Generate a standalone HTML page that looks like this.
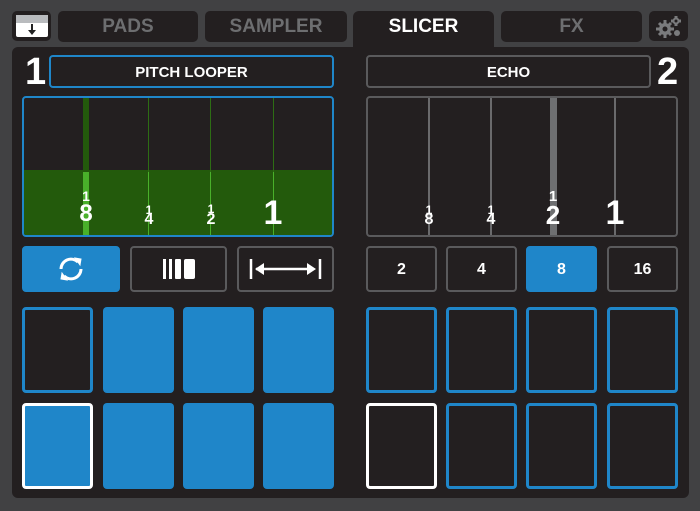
<!DOCTYPE html><html><head><style>
body{margin:0;width:700px;height:511px;background:#414143;position:relative;overflow:hidden;font-family:"Liberation Sans Narrow","Liberation Sans",sans-serif;}
div{position:absolute;box-sizing:border-box}
.tab{top:11px;height:31px;background:#231f20;border-radius:5px;color:#6d6e70;font-weight:bold;font-size:19px;text-align:center;line-height:31px}
.pnl{left:12px;top:47px;width:677px;height:451px;background:#231f20;border-radius:6px}
.hd{top:55px;height:33px;border-radius:4px;color:#fff;font-weight:bold;font-size:15px;text-align:center;line-height:31px}
.big{top:54px;color:#fff;font-weight:bold;font-size:38px;line-height:36px}
.pad{width:71px;height:86px;border-radius:4px}
.btn{top:246px;height:46px;border:2px solid #5a5a5c;border-radius:4px;color:#fff;font-weight:bold;font-size:16px;text-align:center;line-height:44px}
.lbl{color:#fff;font-weight:bold;text-align:center;line-height:1}
</style></head><body>
<div class="pnl"></div>
<div class="tab" style="left:353px;top:11px;width:141px;height:45px;border-radius:6px 6px 0 0;color:#fff">SLICER</div>
<div class="tab" style="left:12px;width:39px;height:30px;"></div>
<div style="left:16px;top:15px;width:32px;height:22px;background:#fff;border-radius:2px"><div style="left:0;top:0;width:32px;height:8px;background:#b9bbbe"></div><div style="left:15px;top:9px;width:2px;height:7px;background:#222"></div><div style="left:12px;top:15px;border-left:4px solid transparent;border-right:4px solid transparent;border-top:5px solid #222"></div></div>
<div class="tab" style="left:58px;width:140px">PADS</div>
<div class="tab" style="left:205px;width:142px">SAMPLER</div>
<div class="tab" style="left:501px;width:141px">FX</div>
<div class="tab" style="left:649px;width:39px;height:30px">
<svg width="39" height="30" style="position:absolute;left:0;top:0"><g fill="#7a7b7d"><circle cx="16" cy="18" r="6"/><circle cx="27" cy="10" r="3.5"/><circle cx="28" cy="22" r="3"/></g><g stroke="#7a7b7d" stroke-width="3"><path d="M16 9v18M7 18h18M10 12l12 12M22 12l-12 12"/><path d="M27 5v10M22 10h10"/></g><circle cx="16" cy="18" r="2.5" fill="#231f20"/><circle cx="27" cy="10" r="1.5" fill="#231f20"/></svg></div>
<div class="big" style="left:25px">1</div>
<div class="big" style="left:657px">2</div>
<div class="hd" style="left:49px;width:285px;border:2px solid #1f86c9">PITCH LOOPER</div>
<div class="hd" style="left:366px;width:285px;border:2px solid #5a5a5c">ECHO</div>
<div style="left:22px;top:96px;width:312px;height:141px;border:2px solid #1f86c9;border-radius:4px;overflow:hidden;background:#231f20">
<div style="left:0;top:72px;width:310px;height:70px;background:#235a0c"></div>
<div style="left:59px;top:0;width:6px;height:74px;background:#235a0c"></div>
<div style="left:59px;top:74px;width:6px;height:70px;background:#49b02a"></div>
<div style="left:124px;top:0;width:1px;height:74px;background:#2d6d14"></div>
<div style="left:124px;top:74px;width:1px;height:70px;background:#49b02a"></div>
<div style="left:186px;top:0;width:1px;height:74px;background:#2d6d14"></div>
<div style="left:186px;top:74px;width:1px;height:70px;background:#49b02a"></div>
<div style="left:249px;top:0;width:1px;height:74px;background:#2d6d14"></div>
<div style="left:249px;top:74px;width:1px;height:70px;background:#49b02a"></div>
<div class="lbl" style="left:52px;top:91px;width:20px;font-size:14px">1</div><div class="lbl" style="left:52px;top:104px;width:20px;font-size:24px">8</div>
<div class="lbl" style="left:115px;top:106px;width:20px;font-size:12px">1</div><div class="lbl" style="left:115px;top:114px;width:20px;font-size:16px">4</div>
<div class="lbl" style="left:177px;top:105px;width:20px;font-size:12px">1</div><div class="lbl" style="left:177px;top:114px;width:20px;font-size:16px">2</div>
<div class="lbl" style="left:237px;top:98px;width:24px;font-size:34px">1</div>
</div>
<div style="left:366px;top:96px;width:312px;height:141px;border:2px solid #5a5a5c;border-radius:4px;overflow:hidden">
<div style="left:60px;top:0;width:2px;height:140px;background:#6a6a6c"></div>
<div style="left:122px;top:0;width:2px;height:140px;background:#6a6a6c"></div>
<div style="left:182px;top:0;width:7px;height:140px;background:#6e6f71"></div>
<div style="left:246px;top:0;width:2px;height:140px;background:#6a6a6c"></div>
<div class="lbl" style="left:51px;top:106px;width:20px;font-size:12px">1</div><div class="lbl" style="left:51px;top:114px;width:20px;font-size:16px">8</div>
<div class="lbl" style="left:113px;top:106px;width:20px;font-size:12px">1</div><div class="lbl" style="left:113px;top:114px;width:20px;font-size:16px">4</div>
<div class="lbl" style="left:175px;top:91px;width:20px;font-size:15px">1</div><div class="lbl" style="left:175px;top:104px;width:20px;font-size:26px">2</div>
<div class="lbl" style="left:235px;top:98px;width:24px;font-size:34px">1</div>
</div>
<div class="btn" style="left:22px;width:98px;background:#1f86c9;border-color:#1f86c9">
<svg width="34" height="30" style="position:absolute;left:30px;top:6px" fill="none" stroke="#fff" stroke-width="3"><path d="M7 15a10 10 0 0 1 17-7"/><path d="M27 15a10 10 0 0 1-17 7"/><path d="M21 4l6 1-1 6z" fill="#fff" stroke-width="1"/><path d="M13 26l-6-1 1-6z" fill="#fff" stroke-width="1"/></svg></div>
<div class="btn" style="left:130px;width:97px"><svg width="40" height="24" style="position:absolute;left:29px;top:9px" fill="#fff"><rect x="2" y="2" width="3" height="20"/><rect x="8" y="2" width="3" height="20"/><rect x="14" y="2" width="6" height="20" rx="1"/><rect x="23" y="2" width="11" height="20" rx="2"/></svg></div>
<div class="btn" style="left:237px;width:97px"><svg width="76" height="24" style="position:absolute;left:9px;top:9px" fill="#fff" stroke="#fff"><path d="M3 2v20M72 2v20" stroke-width="2.5"/><path d="M8 12h58" stroke-width="2.5"/><path d="M7 12l9-6v12z M68 12l-9-6v12z" stroke="none"/></svg></div>
<div class="btn" style="left:366px;width:71px">2</div>
<div class="btn" style="left:446px;width:71px">4</div>
<div class="btn" style="left:526px;width:71px;background:#1f86c9;border-color:#1f86c9">8</div>
<div class="btn" style="left:607px;width:71px">16</div>
<div class="pad" style="left:22px;top:307px;border:3px solid #1f86c9"></div>
<div class="pad" style="left:103px;top:307px;background:#1f86c9"></div>
<div class="pad" style="left:183px;top:307px;background:#1f86c9"></div>
<div class="pad" style="left:263px;top:307px;background:#1f86c9"></div>
<div class="pad" style="left:22px;top:403px;background:#1f86c9;border:3px solid #fff"></div>
<div class="pad" style="left:103px;top:403px;background:#1f86c9"></div>
<div class="pad" style="left:183px;top:403px;background:#1f86c9"></div>
<div class="pad" style="left:263px;top:403px;background:#1f86c9"></div>
<div class="pad" style="left:366px;top:307px;border:3px solid #1f86c9"></div>
<div class="pad" style="left:446px;top:307px;border:3px solid #1f86c9"></div>
<div class="pad" style="left:526px;top:307px;border:3px solid #1f86c9"></div>
<div class="pad" style="left:607px;top:307px;border:3px solid #1f86c9"></div>
<div class="pad" style="left:366px;top:403px;border:3px solid #fff"></div>
<div class="pad" style="left:446px;top:403px;border:3px solid #1f86c9"></div>
<div class="pad" style="left:526px;top:403px;border:3px solid #1f86c9"></div>
<div class="pad" style="left:607px;top:403px;border:3px solid #1f86c9"></div>
</body></html>
